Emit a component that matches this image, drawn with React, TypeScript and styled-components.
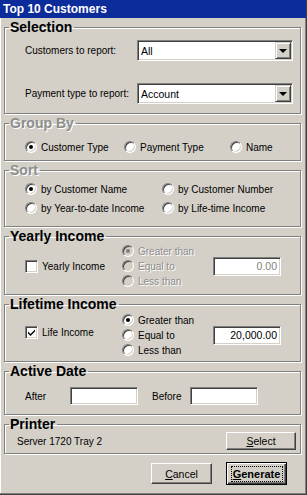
import React from 'react';
import styled, { createGlobalStyle } from 'styled-components';

const Global = createGlobalStyle`
  html, body { margin: 0; padding: 0; background: #d4d0c8; }
  body { font-family: "Liberation Sans", Arial, sans-serif; font-size: 10px; color: #000; }
  * { box-sizing: border-box; }
`;

const Window = styled.div`
  width: 307px;
  height: 495px;
  background: #d4d0c8;
  border-right: 1px solid #404040;
  border-bottom: 1px solid #404040;
  box-shadow: inset -1px -1px 0 #808080, inset 1px 0 0 #ffffff;
  display: flex;
  flex-direction: column;
  overflow: hidden;
`;

const TitleBar = styled.div`
  height: 18px;
  background: #0c2c9c;
  color: #fff;
  font: bold 12px/18px "Liberation Sans", Arial, sans-serif;
  padding-left: 3px;
  white-space: nowrap;
`;

const Body = styled.div`
  display: flex;
  flex-direction: column;
  gap: 2px;
  padding: 2px 5px 0 4px;
`;

const Group = styled.fieldset<{ $h: number }>`
  margin: 0;
  padding: 0;
  min-width: 0;
  height: ${(p) => p.$h}px;
  border: 1px solid #808080;
  box-shadow: inset 1px 1px 0 #ffffff, 1px 1px 0 #ffffff;
`;

const Legend = styled.legend<{ $disabled?: boolean }>`
  margin-left: 4px;
  padding: 0 2px 0 1px;
  font: bold 14px/14px "Liberation Sans", Arial, sans-serif;
  color: ${(p) => (p.$disabled ? '#8e8e8e' : '#000')};
  text-shadow: ${(p) => (p.$disabled ? '1px 1px 0 #fff' : 'none')};
`;

const SelectionGrid = styled.div`
  display: grid;
  grid-template-columns: 112px 156px;
  row-gap: 22px;
  align-items: center;
  padding: 6px 0 0 20px;
`;

const Label = styled.span<{ $disabled?: boolean }>`
  font-size: 10px;
  white-space: nowrap;
  color: ${(p) => (p.$disabled ? '#8e8e8e' : '#000')};
  text-shadow: ${(p) => (p.$disabled ? '1px 1px 0 #fff' : 'none')};
`;

const Sunken = styled.div<{ $w: number; $h: number }>`
  width: ${(p) => p.$w}px;
  height: ${(p) => p.$h}px;
  background: #fff;
  border: 1px solid;
  border-color: #808080 #ffffff #ffffff #808080;
  box-shadow: inset 1px 1px 0 #404040, inset -1px -1px 0 #d4d0c8;
`;

const Combo = styled(Sunken)`
  display: flex;
  align-items: center;
  justify-content: space-between;
  padding: 1px 1px 1px 3px;
  font-size: 10.5px;
`;

const DropButton = styled.div`
  width: 16px;
  height: 17px;
  background: #d4d0c8;
  border: 1px solid;
  border-color: #d4d0c8 #404040 #404040 #d4d0c8;
  box-shadow: inset 1px 1px 0 #ffffff, inset -1px -1px 0 #808080;
  display: flex;
  align-items: center;
  justify-content: center;
`;

const Arrow = styled.span`
  width: 0;
  height: 0;
  border-left: 4px solid transparent;
  border-right: 4px solid transparent;
  border-top: 4px solid #000;
  margin-top: 1px;
`;

const OptionRow = styled.div<{ $cols: string; $pt: number; $rowGap?: number }>`
  display: grid;
  grid-template-columns: ${(p) => p.$cols};
  row-gap: ${(p) => p.$rowGap ?? 0}px;
  padding: ${(p) => p.$pt}px 0 0 20px;
`;

const Option = styled.label`
  display: flex;
  align-items: center;
  gap: 4px;
  height: 12px;
  white-space: nowrap;
`;

const RadioMark = styled.span<{ $checked?: boolean; $disabled?: boolean }>`
  position: relative;
  flex: none;
  width: 12px;
  height: 12px;
  border-radius: 50%;
  background: ${(p) => (p.$disabled ? '#d4d0c8' : '#fff')};
  border: 1px solid;
  border-color: #808080 #ffffff #ffffff #808080;
  box-shadow: inset 1px 1px 0 #404040, inset -1px -1px 0 #d4d0c8;
  &::after {
    content: '';
    display: ${(p) => (p.$checked ? 'block' : 'none')};
    position: absolute;
    left: 3px;
    top: 3px;
    width: 4px;
    height: 4px;
    border-radius: 50%;
    background: ${(p) => (p.$disabled ? '#808080' : '#000')};
  }
`;

const CheckMark = styled.span`
  flex: none;
  width: 13px;
  height: 13px;
  background: #fff;
  border: 1px solid;
  border-color: #808080 #ffffff #ffffff #808080;
  box-shadow: inset 1px 1px 0 #404040, inset -1px -1px 0 #d4d0c8;
  display: flex;
  align-items: center;
  justify-content: center;
`;

const IncomeGrid = styled.div<{ $pt: number }>`
  display: grid;
  grid-template-columns: 97px 91px 68px;
  align-items: center;
  padding: ${(p) => p.$pt}px 0 0 20px;
`;

const CheckOption = styled.label<{ $shift?: number }>`
  display: flex;
  align-items: center;
  gap: 4px;
  white-space: nowrap;
  margin-bottom: ${(p) => p.$shift ?? 0}px;
`;

const RadioStack = styled.div`
  display: flex;
  flex-direction: column;
  gap: 3px;
`;

const NumberField = styled(Sunken)<{ $dim?: boolean }>`
  display: flex;
  align-items: center;
  justify-content: flex-end;
  padding-right: 3px;
  font-size: 10.5px;
  color: ${(p) => (p.$dim ? '#808080' : '#000')};
`;

const DateRow = styled.div`
  display: grid;
  grid-template-columns: 45px 82px 38px 68px;
  align-items: center;
  padding: 9px 0 0 20px;
`;

const PrinterRow = styled.div`
  display: flex;
  align-items: center;
  justify-content: space-between;
  padding: 1px 4px 0 12px;
`;

const Button = styled.button<{ $w: number; $h: number; $default?: boolean }>`
  width: ${(p) => p.$w}px;
  height: ${(p) => p.$h}px;
  margin: 0;
  padding: 0;
  background: #d4d0c8;
  font-family: "Liberation Sans", Arial, sans-serif;
  font-size: ${(p) => (p.$default ? '11px' : '10.5px')};
  font-weight: ${(p) => (p.$default ? 'bold' : 'normal')};
  color: #000;
  border: 1px solid;
  border-color: ${(p) => (p.$default ? '#000' : '#ffffff #404040 #404040 #ffffff')};
  box-shadow: ${(p) =>
    p.$default
      ? 'inset 1px 1px 0 #ffffff, inset -1px -1px 0 #404040, inset -2px -2px 0 #808080'
      : 'inset -1px -1px 0 #808080'};
  display: flex;
  align-items: center;
  justify-content: center;
`;

const FocusBox = styled.span`
  display: flex;
  align-items: center;
  justify-content: center;
  width: 50px;
  height: 14px;
  outline: 1px dotted #000;
`;

const Key = styled.span`
  text-decoration: underline;
`;

const ButtonRow = styled.div`
  display: flex;
  justify-content: flex-end;
  align-items: center;
  gap: 14px;
  padding: 8px 19px 0 0;
`;

const Radio = ({ label, checked, disabled }: { label: string; checked?: boolean; disabled?: boolean }) => (
  <Option>
    <RadioMark $checked={checked} $disabled={disabled} />
    <Label $disabled={disabled}>{label}</Label>
  </Option>
);

const Check = ({ label, checked, shift }: { label: string; checked?: boolean; shift?: number }) => (
  <CheckOption $shift={shift}>
    <CheckMark>
      {checked && (
        <svg width="7" height="7" viewBox="0 0 7 7">
          <path d="M0 2.5 L0 4.5 L2.5 7 L7 2.5 L7 0.5 L2.5 5 Z" fill="#000" />
        </svg>
      )}
    </CheckMark>
    <Label>{label}</Label>
  </CheckOption>
);

export default function App() {
  return (
    <>
      <Global />
      <Window>
        <TitleBar>Top 10 Customers</TitleBar>
        <Body>
          <Group $h={94}>
            <Legend>Selection</Legend>
            <SelectionGrid>
              <Label>Customers to report:</Label>
              <Combo $w={156} $h={21}>
                <span>All</span>
                <DropButton>
                  <Arrow />
                </DropButton>
              </Combo>
              <Label>Payment type to report:</Label>
              <Combo $w={156} $h={21}>
                <span>Account</span>
                <DropButton>
                  <Arrow />
                </DropButton>
              </Combo>
            </SelectionGrid>
          </Group>

          <Group $h={45}>
            <Legend $disabled>Group By</Legend>
            <OptionRow $cols="99px 106px auto" $pt={11}>
              <Radio label="Customer Type" checked />
              <Radio label="Payment Type" />
              <Radio label="Name" />
            </OptionRow>
          </Group>

          <Group $h={64}>
            <Legend $disabled>Sort</Legend>
            <OptionRow $cols="137px auto" $pt={6} $rowGap={7}>
              <Radio label="by Customer Name" checked />
              <Radio label="by Customer Number" />
              <Radio label="by Year-to-date Income" />
              <Radio label="by Life-time Income" />
            </OptionRow>
          </Group>

          <Group $h={66}>
            <Legend>Yearly Income</Legend>
            <IncomeGrid $pt={2}>
              <Check label="Yearly Income" />
              <RadioStack>
                <Radio label="Greater than" checked disabled />
                <Radio label="Equal to" disabled />
                <Radio label="Less than" disabled />
              </RadioStack>
              <NumberField $w={68} $h={19} $dim>0.00</NumberField>
            </IncomeGrid>
          </Group>

          <Group $h={65}>
            <Legend>Lifetime Income</Legend>
            <IncomeGrid $pt={3}>
              <Check label="Life Income" checked shift={6} />
              <RadioStack>
                <Radio label="Greater than" checked />
                <Radio label="Equal to" />
                <Radio label="Less than" />
              </RadioStack>
              <NumberField $w={68} $h={19}>20,000.00</NumberField>
            </IncomeGrid>
          </Group>

          <Group $h={51}>
            <Legend>Active Date</Legend>
            <DateRow>
              <Label>After</Label>
              <Sunken $w={68} $h={18} />
              <Label>Before</Label>
              <Sunken $w={68} $h={18} />
            </DateRow>
          </Group>

          <Group $h={37}>
            <Legend>Printer</Legend>
            <PrinterRow>
              <Label>Server 1720 Tray 2</Label>
              <Button $w={70} $h={18}>
                <span>
                  <Key>S</Key>elect
                </span>
              </Button>
            </PrinterRow>
          </Group>
        </Body>
        <ButtonRow>
          <Button $w={61} $h={21}>
            <span>
              <Key>C</Key>ancel
            </span>
          </Button>
          <Button $w={61} $h={23} $default>
            <FocusBox>
              <span>
                <Key>G</Key>enerate
              </span>
            </FocusBox>
          </Button>
        </ButtonRow>
      </Window>
    </>
  );
}
